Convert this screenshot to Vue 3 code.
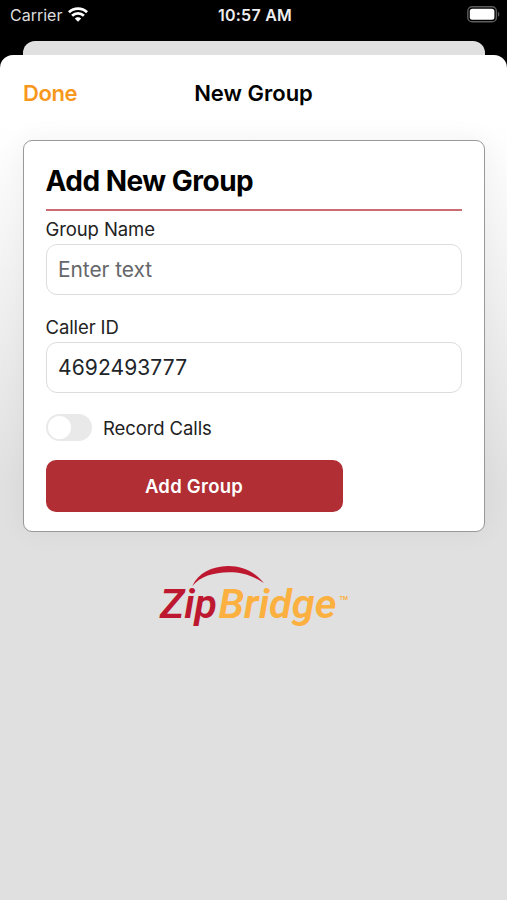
<script setup>
import { ref } from 'vue'

const groupName = ref('')
const callerId = ref('4692493777')
const recordCalls = ref(false)
</script>

<template>
  <div class="screen">
    <header class="status">
      <div class="carrier">
        <span class="carrier-name">Carrier</span>
        <svg class="wifi" width="20" height="15" viewBox="0 0 20 15" fill="none" stroke="#fff">
          <path d="M.9 5.3C6 .4 14 .4 19.1 5.3" stroke-width="2.9" />
          <path d="M4.1 8.8C7.4 5.6 12.6 5.6 15.9 8.8" stroke-width="2.7" />
          <path d="M10 14.7 6.8 11.5C8.5 9.8 11.5 9.8 13.2 11.5Z" fill="#fff" stroke="none" />
        </svg>
      </div>
      <span class="clock">10:57 AM</span>
      <svg class="battery" width="33" height="17" viewBox="0 0 33 17">
        <rect x=".8" y=".8" width="28.6" height="15" rx="4.4" fill="none" stroke="#5c5c5c" stroke-width="1.4" />
        <rect x="2.8" y="2.8" width="24.6" height="11" rx="2.5" fill="#fff" />
        <path d="M31 5.8C32.8 6.5 32.8 10.1 31 10.8Z" fill="#5c5c5c" />
      </svg>
    </header>
    <div class="behind"></div>
    <main class="sheet">
      <nav class="nav">
        <span class="done">Done</span>
        <span class="nav-title">New Group</span>
      </nav>
      <section class="card">
        <h1 class="heading">Add New Group</h1>
        <label class="label" for="name">Group Name</label>
        <input id="name" v-model="groupName" class="field name-field" placeholder="Enter text" />
        <label class="label caller-label" for="caller">Caller ID</label>
        <input id="caller" v-model="callerId" class="field caller-field" />
        <div class="toggle-row" @click="recordCalls = !recordCalls">
          <span class="toggle" :class="{ on: recordCalls }"><span class="knob"></span></span>
          <span class="toggle-label">Record Calls</span>
        </div>
        <button class="submit">Add Group</button>
      </section>
      <svg class="logo" width="200" height="70" viewBox="0 0 200 70">
        <path d="M37.3 24C43 11 57 4.2 73 4C87 4 99 9 109 21.2C98 13.6 87 10.3 74 10.3C58 10.5 45.500 14.500 37.3 24Z" fill="#bd1830" />
        <g class="wordmark">
          <text x="5" y="56" fill="#bd1830" textLength="57" lengthAdjust="spacingAndGlyphs">Zip</text>
          <text x="63.500" y="56" fill="#fbb040" textLength="118" lengthAdjust="spacingAndGlyphs">Bridge</text>
        </g>
        <text class="tm" x="184.500" y="38" fill="#fbb040" textLength="8.500" lengthAdjust="spacingAndGlyphs">TM</text>
      </svg>
    </main>
  </div>
</template>

<style>
body {
  background: #000;
}
</style>

<style scoped>
.screen {
  width: 507px;
  height: 900px;
  overflow: hidden;
  background: #000;
  font-family: Inter, "Liberation Sans", sans-serif;
  display: flex;
  flex-direction: column;
}
.status {
  height: 41px;
  flex: none;
  box-sizing: border-box;
  padding: 5px 7px 0 10px;
  display: grid;
  grid-template-columns: 1fr auto 1fr;
  align-items: start;
  color: #fff;
  line-height: 20px;
}
.carrier {
  display: flex;
  gap: 6px;
}
.carrier-name {
  font-size: 16px;
  color: #ddd;
}
.wifi {
  margin-top: 2px;
}
.clock {
  font-size: 16px;
  font-weight: 600;
  letter-spacing: 0.25px;
  color: #eee;
}
.battery {
  justify-self: end;
  margin-top: 1px;
}
.behind {
  height: 14px;
  flex: none;
  margin: 0 22px 0 23px;
  border-radius: 12px 12px 0 0;
  background: #e0e0e0;
}
.sheet {
  flex: 1;
  border-radius: 13px 13px 0 0;
  background: linear-gradient(#fff 0, #fff 70px, #e0e0e0 430px);
  display: flex;
  flex-direction: column;
  overflow: hidden;
}
.nav {
  height: 85px;
  flex: none;
  box-sizing: border-box;
  padding: 24px 23px 0;
  display: grid;
  grid-template-columns: 1fr auto 1fr;
  align-items: start;
  line-height: 28px;
  font-size: 22px;
}
.done {
  color: #f7981d;
  font-weight: 600;
  letter-spacing: -0.4px;
}
.nav-title {
  font-weight: 600;
  color: #000;
}
.card {
  height: 392px;
  flex: none;
  box-sizing: border-box;
  margin: 0 22px 0 22.5px;
  padding: 20px 22px 0;
  border: 1px solid #999;
  border-radius: 9px;
  background: #fff;
  box-shadow: 0 0 28px rgba(0, 0, 0, 0.05);
  display: flex;
  flex-direction: column;
  align-items: stretch;
}
.heading {
  margin: 0;
  height: 50px;
  box-sizing: border-box;
  border-bottom: 2px solid #cc6b72;
  font-size: 28px;
  font-weight: 700;
  letter-spacing: -0.5px;
  line-height: 40px;
  color: #000;
}
.label {
  margin-top: 6px;
  height: 27px;
  line-height: 24px;
  font-size: 18.5px;
  letter-spacing: -0.1px;
  color: #222;
}
.caller-label {
  margin-top: 20px;
}
.field {
  height: 51px;
  box-sizing: border-box;
  width: 100%;
  padding: 0 11.5px;
  border: 1px solid #ddd;
  border-radius: 11px;
  background: #fff;
  outline: none;
  font-family: inherit;
  font-size: 21px;
  letter-spacing: 0.1px;
  color: #212529;
}
.field::placeholder {
  color: #65676a;
  letter-spacing: -0.1px;
  opacity: 1;
}
.toggle-row {
  margin-top: 21px;
  height: 27px;
  display: flex;
  align-items: center;
  gap: 11.5px;
}
.toggle {
  width: 46px;
  height: 27px;
  box-sizing: border-box;
  padding: 2px;
  border-radius: 14px;
  background: #e9e9e9;
  display: flex;
}
.toggle.on {
  justify-content: flex-end;
  background: #b02e34;
}
.knob {
  width: 23px;
  height: 23px;
  border-radius: 50%;
  background: #fff;
}
.toggle-label {
  font-size: 18.5px;
  letter-spacing: -0.1px;
  color: #222;
}
.submit {
  margin: 19px 0 0;
  width: 297px;
  height: 52px;
  padding: 0;
  border: 0;
  border-radius: 10px;
  background: #b02e34;
  color: #fff;
  font-family: inherit;
  font-size: 18.5px;
  font-weight: 600;
  letter-spacing: 0.25px;
}
.logo {
  flex: none;
  margin: 30px 0 0 155px;
}
.wordmark {
  font: italic 600 41px "Roboto", sans-serif;
}
.tm {
  font: 700 6px "Roboto", sans-serif;
}
</style>
